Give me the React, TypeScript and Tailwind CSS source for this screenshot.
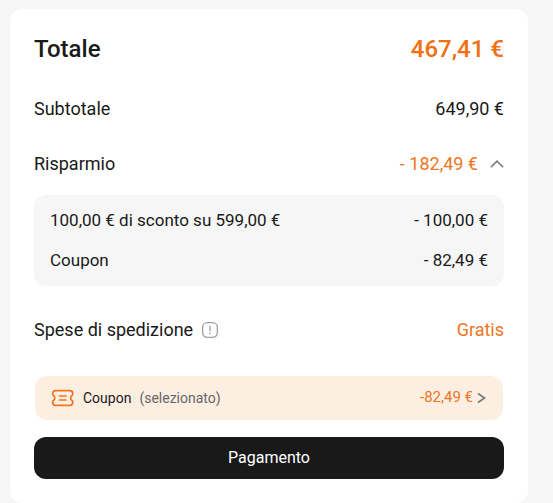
import React from 'react';

/**
 * Props pour le composant SummaryRow
 */
interface SummaryRowProps {
  label: React.ReactNode;
  children: React.ReactNode;
}

/**
 * Ligne du récapitulatif : libellé à gauche, montant à droite
 */
const SummaryRow: React.FC<SummaryRowProps> = ({ label, children }) => {
  return (
    <div className="flex items-center justify-between">
      <dt className="flex items-center gap-2">{label}</dt>
      <dd className="flex items-center gap-3">{children}</dd>
    </div>
  );
};

const InfoIcon = () => (
  <svg width="18" height="18" viewBox="0 0 18 18" fill="none" stroke="#a3a3a3" aria-hidden="true">
    <rect x="1.6" y="1.6" width="14.8" height="14.8" rx="4.8" strokeWidth="1.4" />
    <path d="M9 5v5.2M9 11.6v1.6" strokeWidth="1.4" />
  </svg>
);

const TicketIcon = () => (
  <svg width="24" height="18" viewBox="0 0 24 18" fill="none" stroke="#ee7623" strokeWidth="1.7" strokeLinecap="round" strokeLinejoin="round" aria-hidden="true">
    <path d="M4.500 1.600h14.400a2.800 2.800 0 0 1 2.800 2.800v.8c0 .7-.4 1-.9 1.400a3 3 0 0 0 0 4.800c.5.4.9.7.9 1.400v.8a2.800 2.800 0 0 1-2.800 2.800H4.500a2.800 2.800 0 0 1-2.800-2.800v-.8c0-.7.4-1 .9-1.400a3 3 0 0 0 0-4.800c-.5-.4-.9-.7-.9-1.400v-.8a2.800 2.800 0 0 1 2.800-2.800z" />
    <path d="M8.500 7h6.500M8.500 11h6.500" />
  </svg>
);

const discounts = [
  { label: '100,00 € di sconto su 599,00 €', amount: '- 100,00 €' },
  { label: 'Coupon', amount: '- 82,49 €' },
];

export default function App() {
  return (
    <main className="min-h-screen bg-[#f6f6f6] pt-[9px] pr-[25px] pl-[10px] font-['Roboto','Liberation_Sans',sans-serif] text-[#191919]">
      <section className="rounded-xl bg-white p-6">
        <dl className="text-lg leading-6">
          <div className="flex items-center justify-between text-2xl leading-8 font-medium">
            <dt>Totale</dt>
            <dd className="text-[#f07012]">467,41 €</dd>
          </div>

          <div className="mt-8 flex flex-col gap-[31px]">
            <SummaryRow label="Subtotale">649,90 €</SummaryRow>
            <SummaryRow label="Risparmio">
              <span className="text-[#ee7623]">- 182,49 €</span>
              <button type="button" aria-label="Nascondi dettagli" aria-expanded="true">
                <svg width="14" height="8" viewBox="0 0 14 8" fill="none" stroke="#7a7a7a" strokeWidth="1.6">
                  <path d="M.8 7.2L7 1.2l6.2 6" />
                </svg>
              </button>
            </SummaryRow>
          </div>

          <div className="mt-[19px] flex flex-col gap-4 rounded-xl bg-[#f6f6f6] px-4 pt-[13px] pb-[14px] text-[17px] leading-6">
            {discounts.map((discount) => (
              <SummaryRow key={discount.label} label={discount.label}>
                {discount.amount}
              </SummaryRow>
            ))}
          </div>

          <div className="mt-8">
            <SummaryRow
              label={
                <>
                  Spese di spedizione
                  <InfoIcon />
                </>
              }
            >
              <span className="text-[#ee7623]">Gratis</span>
            </SummaryRow>
          </div>
        </dl>

        <div className="mt-[34px] px-px">
          <button type="button" className="flex h-11 w-full items-center rounded-xl bg-[#fdeee2] px-4 text-sm">
            <TicketIcon />
            <span className="ml-2">Coupon</span>
            <span className="ml-2 text-[#666666]">(selezionato)</span>
            <span className="ml-auto text-[15px] text-[#ee7623]">-82,49 €</span>
            <svg className="ml-1" width="10" height="12" viewBox="0 0 10 12" fill="none" stroke="#777777" strokeWidth="1.6" aria-hidden="true">
              <path d="M1 1.5L7.600 6 1 10.500" />
            </svg>
          </button>
        </div>

        <button type="button" className="mt-[17px] h-[42px] w-full rounded-xl bg-[#191919] text-base text-white">
          Pagamento
        </button>
      </section>
    </main>
  );
}
